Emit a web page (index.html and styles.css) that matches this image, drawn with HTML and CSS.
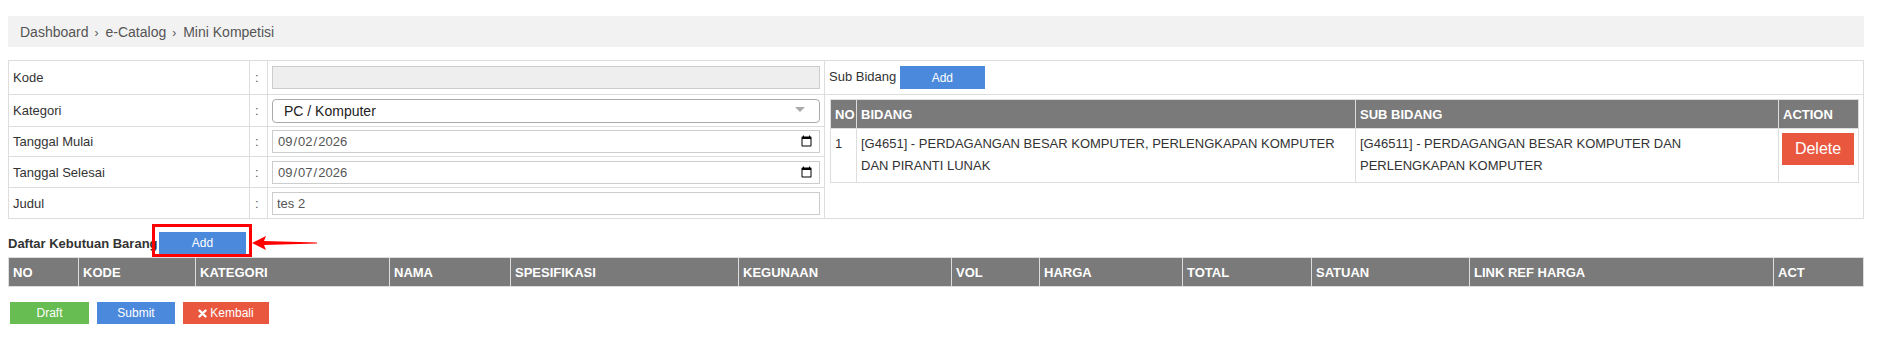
FILE: index.html
```html
<!DOCTYPE html>
<html lang="id">
<head>
    <meta charset="UTF-8">
    <title>Mini Kompetisi</title>
    <link rel="stylesheet" href="styles.css">
</head>
<body>
    <div class="page">
        <div class="breadcrumb">
            <span>Dashboard</span><span class="sep">&rsaquo;</span>
            <span>e-Catalog</span><span class="sep">&rsaquo;</span>
            <span>Mini Kompetisi</span>
        </div>

        <table class="form-table">
            <colgroup>
                <col style="width:241px">
                <col style="width:18px">
                <col style="width:557px">
                <col>
            </colgroup>
            <tr class="r1">
                <td>Kode</td>
                <td class="colon">:</td>
                <td><input class="field" type="text" disabled></td>
                <td class="sub-head">Sub Bidang <button class="btn btn-blue btn-sub">Add</button></td>
            </tr>
            <tr class="r2">
                <td>Kategori</td>
                <td class="colon">:</td>
                <td>
                    <div class="select">
                        <span>PC / Komputer</span>
                        <span class="caret"></span>
                    </div>
                </td>
                <td rowspan="4" class="sub-cell">
                    <table class="data sub-table">
                        <colgroup>
                            <col style="width:26px">
                            <col style="width:499px">
                            <col style="width:423px">
                            <col>
                        </colgroup>
                        <tr>
                            <th>NO</th>
                            <th>BIDANG</th>
                            <th>SUB BIDANG</th>
                            <th>ACTION</th>
                        </tr>
                        <tr>
                            <td>1</td>
                            <td>[G4651] - PERDAGANGAN BESAR KOMPUTER, PERLENGKAPAN KOMPUTER DAN PIRANTI LUNAK</td>
                            <td class="wide">[G46511] - PERDAGANGAN BESAR KOMPUTER DAN PERLENGKAPAN KOMPUTER</td>
                            <td><button class="btn btn-red btn-delete">Delete</button></td>
                        </tr>
                    </table>
                </td>
            </tr>
            <tr class="r3">
                <td>Tanggal Mulai</td>
                <td class="colon">:</td>
                <td><input class="field" type="date" value="2026-09-02"></td>
            </tr>
            <tr class="r4">
                <td>Tanggal Selesai</td>
                <td class="colon">:</td>
                <td><input class="field" type="date" value="2026-09-07"></td>
            </tr>
            <tr class="r5">
                <td>Judul</td>
                <td class="colon">:</td>
                <td><input class="field" type="text" value="tes 2"></td>
            </tr>
        </table>

        <div class="list-head">
            <b>Daftar Kebutuan Barang</b>
            <span class="add-wrap">
                <button class="btn btn-blue btn-add">Add</button>
                <span class="mark"></span>
                <svg class="arrow" width="66" height="16" viewBox="0 0 66 16">
                    <polygon points="0,8 14,1 12,6 65,7.5 65,8.5 12,10 14,15" fill="#f00"/>
                </svg>
            </span>
        </div>

        <table class="data main-table">
            <colgroup>
                <col style="width:70px">
                <col style="width:117px">
                <col style="width:194px">
                <col style="width:121px">
                <col style="width:228px">
                <col style="width:213px">
                <col style="width:88px">
                <col style="width:143px">
                <col style="width:129px">
                <col style="width:158px">
                <col style="width:304px">
                <col>
            </colgroup>
            <tr>
                <th>NO</th>
                <th>KODE</th>
                <th>KATEGORI</th>
                <th>NAMA</th>
                <th>SPESIFIKASI</th>
                <th>KEGUNAAN</th>
                <th>VOL</th>
                <th>HARGA</th>
                <th>TOTAL</th>
                <th>SATUAN</th>
                <th>LINK REF HARGA</th>
                <th>ACT</th>
            </tr>
        </table>

        <div class="actions">
            <button class="btn btn-green">Draft</button>
            <button class="btn btn-blue">Submit</button>
            <button class="btn btn-red btn-back">
                <svg width="9" height="9" viewBox="0 0 9 9"><path d="M1.5 1.5 L7.5 7.5 M7.5 1.5 L1.5 7.5" stroke="#fff" stroke-width="2.4" stroke-linecap="round"/></svg>
                Kembali
            </button>
        </div>
    </div>
</body>
</html>
```

FILE: styles.css
```css
body {
    margin: 0;
    background-color: #fff;
    font-family: "Liberation Sans", Arial, sans-serif;
    font-size: 13px;
    color: #333;
}
.page {
    width: 1856px;
    padding: 16px 0 0 8px;
}
.breadcrumb {
    background-color: #f2f2f2;
    height: 31px;
    display: flex;
    align-items: center;
    padding: 0 12px;
    color: #555;
    font-size: 14px;
}
.breadcrumb .sep {
    margin: 3px 7px 0 6px;
    font-size: 12px;
}
table {
    border-collapse: collapse;
    table-layout: fixed;
}
.form-table {
    width: 1856px;
    margin-top: 13px;
}
.form-table > tbody > tr > td {
    border: 1px solid #ddd;
    padding: 0 4px;
    vertical-align: middle;
}
.form-table .r1 { height: 34px; }
.form-table .r2 { height: 32px; }
.form-table .r3 { height: 30px; }
.form-table .r4 { height: 31px; }
.form-table .r5 { height: 31px; }
.form-table td.colon {
    color: #555;
    padding-left: 5px;
}
.field {
    box-sizing: border-box;
    width: 100%;
    height: 23px;
    border: 1px solid #ccc;
    padding: 0 4px;
    font-family: "Liberation Sans", Arial, sans-serif;
    font-size: 13px;
    color: #555;
    background-color: #fff;
    display: block;
}
.field:disabled {
    background-color: #eee;
}
.select {
    box-sizing: border-box;
    height: 24px;
    border: 1px solid #aaa;
    border-radius: 4px;
    display: flex;
    align-items: center;
    justify-content: space-between;
    padding: 0 14px 0 11px;
    font-size: 14px;
    color: #222;
}
.select .caret {
    width: 0;
    height: 0;
    border-left: 5px solid transparent;
    border-right: 5px solid transparent;
    border-top: 5px solid #aaa;
    margin-top: -2px;
}
.form-table td.sub-head {
    padding-left: 4px;
    color: #333;
}
.form-table td.sub-cell {
    vertical-align: top;
    padding: 4px 5px;
}
.btn {
    border: none;
    color: #fff;
    font-family: "Liberation Sans", Arial, sans-serif;
    font-size: 12px;
    height: 22px;
    padding: 0;
    cursor: pointer;
}
.btn-blue { background-color: #4a89dc; }
.btn-red { background-color: #e9573f; }
.btn-green { background-color: #67bd51; }
.btn-sub {
    width: 85px;
    height: 23px;
    margin-left: 0;
    vertical-align: middle;
}
.data {
    border: 1px solid #ddd;
}
.data th {
    background-color: #7a7a7a;
    color: #fff;
    font-weight: bold;
    text-align: left;
    font-size: 13px;
    padding: 0 4px;
    border: 1px solid #ddd;
    white-space: nowrap;
}
.sub-table {
    width: 1029px;
}
.sub-table th {
    height: 28px;
}
.sub-table td {
    border: 1px solid #ddd;
    padding: 4px 4px 5px;
    line-height: 22px;
    vertical-align: top;
    font-size: 13px;
    color: #333;
}
.sub-table td.wide {
    padding-right: 24px;
}
.btn-delete {
    width: 72px;
    height: 32px;
    font-size: 16px;
    display: block;
    margin-left: -1px;
}
.list-head {
    display: flex;
    align-items: flex-end;
    height: 38px;
}
.list-head b {
    width: 151px;
    white-space: nowrap;
    font-size: 13px;
    color: #333;
    line-height: 13px;
    margin-bottom: 7px;
}
.add-wrap {
    position: relative;
    display: inline-block;
    line-height: 0;
}
.btn-add {
    width: 87px;
    height: 22px;
    margin-bottom: 3px;
}
.mark {
    position: absolute;
    left: -7px;
    top: -8px;
    width: 94px;
    height: 27px;
    border: 3px solid #f00;
}
.arrow {
    position: absolute;
    left: 93px;
    top: 3px;
}
.main-table {
    width: 1856px;
}
.main-table th {
    height: 28px;
}
.actions {
    display: flex;
    gap: 8px;
    margin-top: 15px;
    padding-left: 2px;
}
.actions .btn-green { width: 79px; }
.actions .btn-blue { width: 78px; }
.actions .btn-back {
    width: 86px;
    display: flex;
    align-items: center;
    justify-content: center;
    gap: 3px;
}
```
